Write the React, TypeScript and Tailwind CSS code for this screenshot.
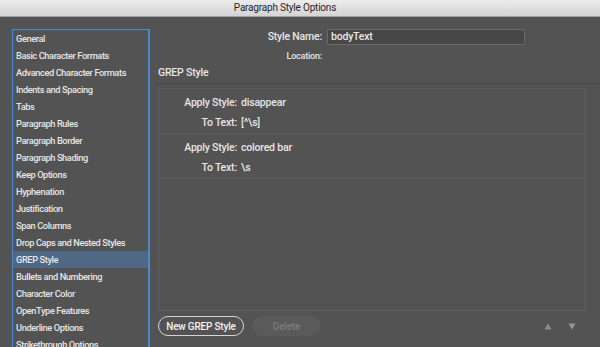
import React from "react";

const items = [
  "General",
  "Basic Character Formats",
  "Advanced Character Formats",
  "Indents and Spacing",
  "Tabs",
  "Paragraph Rules",
  "Paragraph Border",
  "Paragraph Shading",
  "Keep Options",
  "Hyphenation",
  "Justification",
  "Span Columns",
  "Drop Caps and Nested Styles",
  "GREP Style",
  "Bullets and Numbering",
  "Character Color",
  "OpenType Features",
  "Underline Options",
  "Strikethrough Options",
];

const font = { fontFamily: 'Roboto, "Liberation Sans", sans-serif' };

function GrepRow({ style, text }: { style: string; text: string }) {
  return (
    <div className="h-[45px] shrink-0 border-b border-[#5f5f5f] flex flex-col pl-[24px]">
      <div className="flex h-[15px] mt-[6px] items-center">
        <span className="w-[54px] text-right whitespace-nowrap">Apply Style:</span>
        <span className="ml-[4px] whitespace-nowrap">{style}</span>
      </div>
      <div className="flex h-[15px] mt-[5px] items-center">
        <span className="w-[54px] text-right whitespace-nowrap">To Text:</span>
        <span className="ml-[4px] whitespace-nowrap">{text}</span>
      </div>
    </div>
  );
}

export default function App() {
  return (
    <div
      className="w-[600px] h-[347px] overflow-hidden bg-[#535353] text-[#e6e6e6] text-[10.5px] tracking-[-0.2px] font-medium flex flex-col"
      style={font}
    >
      <div className="h-[17px] shrink-0 bg-gradient-to-b from-[#ececec] to-[#d4d4d4] border-b border-[#9e9e9e] flex items-center justify-center pr-[30px]">
        <span className="text-[#262626] font-normal text-[10px] leading-none whitespace-nowrap">
          Paragraph Style Options
        </span>
      </div>
      <div className="flex flex-1 pt-[12px] pl-[12px]">
        <div className="w-[138px] h-[330px] shrink-0 border border-r-2 border-[#4a89cd] flex flex-col text-[9.25px] tracking-[-0.4px]">
          {items.map((it) => (
            <div
              key={it}
              className={
                "h-[17px] shrink-0 flex items-center pl-[3px] leading-none whitespace-nowrap " +
                (it === "GREP Style" ? "bg-[#4f6886]" : "")
              }
            >
              {it}
            </div>
          ))}
        </div>
        <div className="ml-[8px] flex flex-col w-[430px]">
          <div className="flex items-center h-[16px]">
            <span className="w-[164px] text-right whitespace-nowrap">Style Name:</span>
            <div className="ml-[5px] w-[198px] h-[16px] bg-[#474747] border border-[#6b6b6b] rounded-[2px] flex items-center pl-[3px] whitespace-nowrap">
              bodyText
            </div>
          </div>
          <div className="flex items-center h-[14px] mt-[5px]">
            <span className="w-[164px] text-right text-[9px] whitespace-nowrap">Location:</span>
          </div>
          <div className="flex items-center h-[14px] mt-[2px]">
            <span className="whitespace-nowrap">GREP Style</span>
          </div>
          <div className="h-px bg-[#494949] mt-[3px] -ml-[4px] w-[446px]" />
          <div className="mt-[4px] w-[428px] h-[223px] border border-[#5f5f5f] flex flex-col">
            <GrepRow style="disappear" text="[^\s]" />
            <GrepRow style="colored bar" text="\s" />
          </div>
          <div className="flex items-center mt-[5px] h-[20px] text-[10px]">
            <div className="w-[86px] h-[20px] rounded-full border-[1.5px] border-[#d6d6d6] flex items-center justify-center text-[#f2f2f2] whitespace-nowrap">
              New GREP Style
            </div>
            <div className="ml-[8px] w-[69px] h-[20px] rounded-full bg-[#5a5a5a] flex items-center justify-center text-[#7c7c7c] whitespace-nowrap">
              Delete
            </div>
            <div className="flex-1" />
            <svg width="8" height="7" viewBox="0 0 8 7" className="mr-[16px]">
              <polygon points="4,0.5 7.5,6.5 0.5,6.5" fill="#8c8c8c" />
            </svg>
            <svg width="8" height="7" viewBox="0 0 8 7" className="mr-[12px]">
              <polygon points="0.5,0.5 7.5,0.5 4,6.5" fill="#959595" />
            </svg>
          </div>
        </div>
      </div>
    </div>
  );
}
